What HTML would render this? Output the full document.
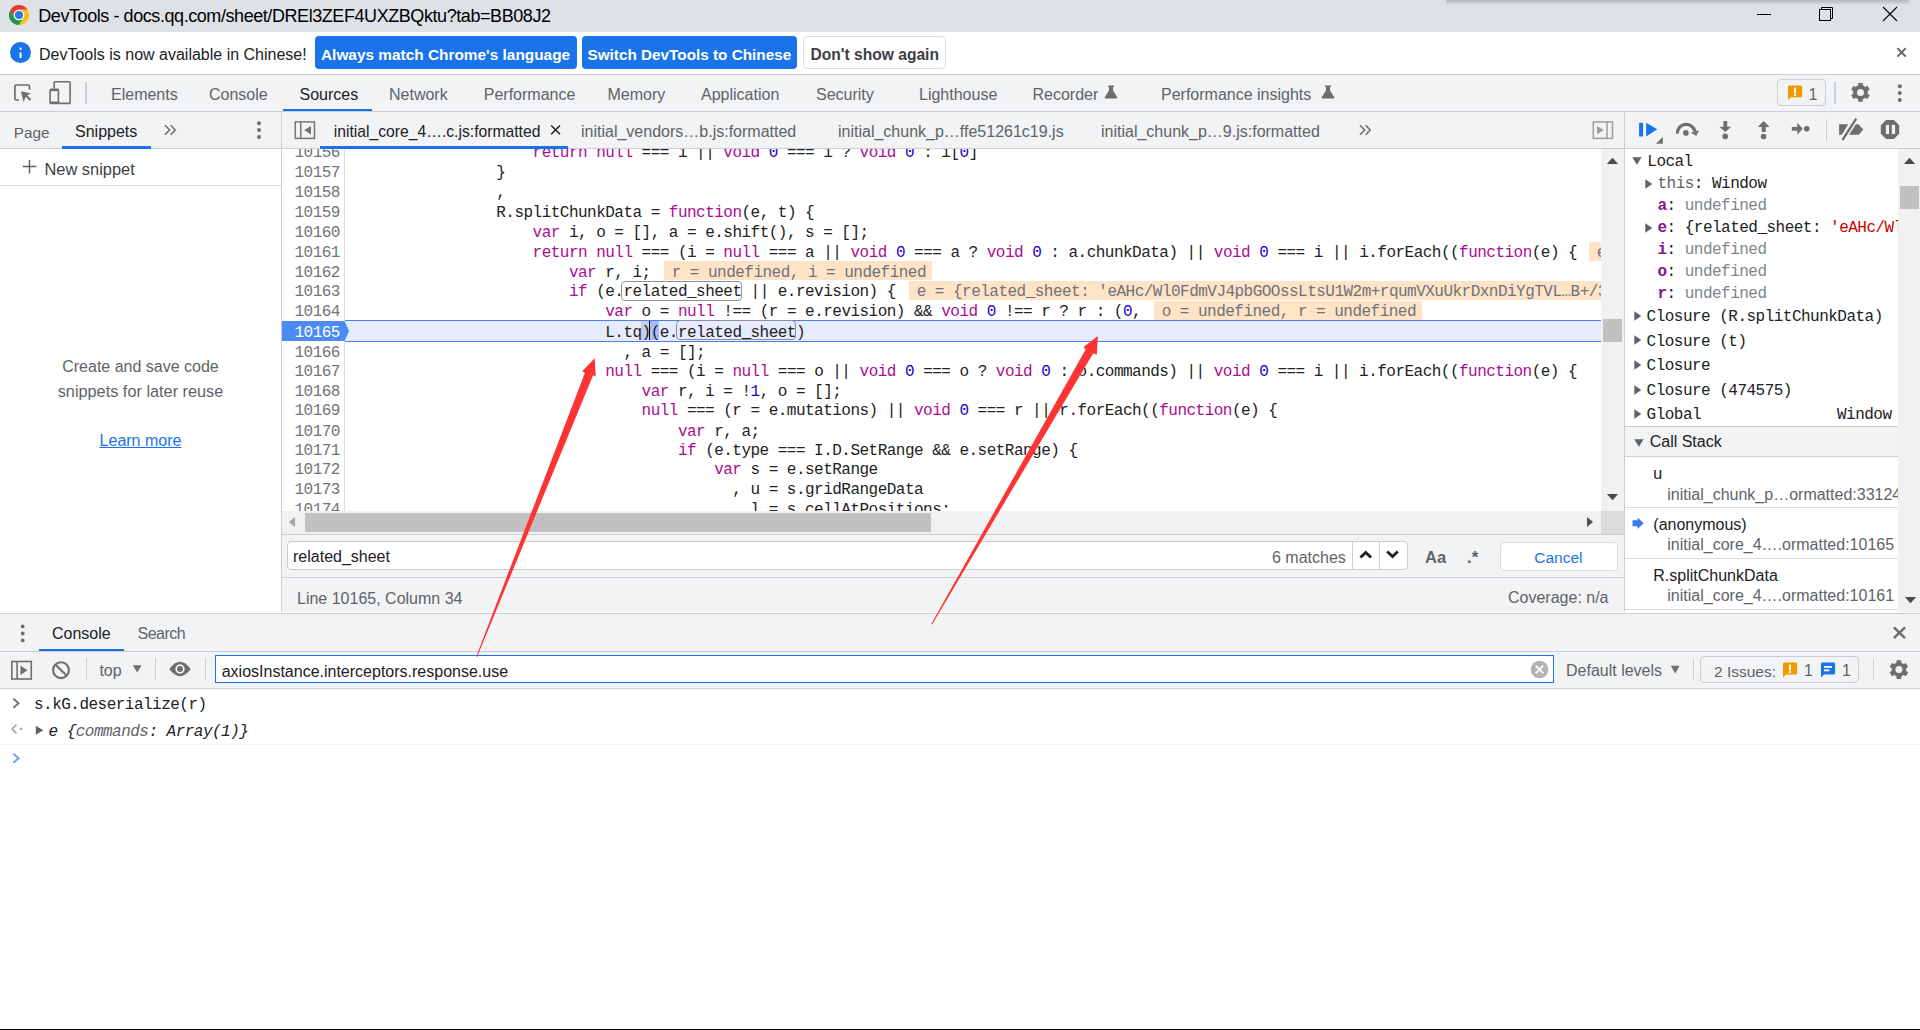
<!DOCTYPE html><html><head><meta charset="utf-8"><style>
html,body{margin:0;padding:0}
body{width:1920px;height:1030px;position:relative;overflow:hidden;background:#fff;font-family:"Liberation Sans",sans-serif}
.a{position:absolute}
.t{position:absolute;white-space:pre}
.k{color:#aa0d91}.n{color:#1c00cf}
</style></head><body>
<div class="a" style="left:0px;top:0px;width:1920px;height:32px;background:#dee1e6;"></div>
<div class="a" style="left:1446px;top:0;width:463px;height:5px;background:linear-gradient(#b5b8bd,#c3c6cb 40%,#dee1e6)"></div>
<svg class="a" style="left:9px;top:5px;" width="20" height="20" viewBox="0 0 20 20"><path d="M10.00 4.70 L18.57 4.85 A10 10 0 0 0 1.25 5.15 L5.41 12.65 A5.3 5.3 0 0 1 10.00 4.70 Z" fill="#e53f31"/><path d="M5.41 12.65 L1.25 5.15 A10 10 0 0 0 10.17 20.00 L14.59 12.65 A5.3 5.3 0 0 1 5.41 12.65 Z" fill="#22994a"/><path d="M14.59 12.65 L10.17 20.00 A10 10 0 0 0 18.57 4.85 L10.00 4.70 A5.3 5.3 0 0 1 14.59 12.65 Z" fill="#fbbf1a"/><circle cx="10" cy="10" r="5.3" fill="#fff"/><circle cx="10" cy="10" r="4.1" fill="#3079e6"/></svg>
<div class="t" style="left:38.3px;top:7.06px;font-size:18px;line-height:18px;color:#000;font-weight:normal;font-family:'Liberation Sans', sans-serif;letter-spacing:-0.43px">DevTools - docs.qq.com/sheet/DREl3ZEF4UXZBQktu?tab=BB08J2</div>
<div class="a" style="left:1757px;top:14px;width:14px;height:1px;background:#000;"></div>
<svg class="a" style="left:1815px;top:4px;" width="22" height="20" viewBox="0 0 22 20"><rect x="4.5" y="5.5" width="11" height="11" fill="none" stroke="#000" stroke-width="1"/><path d="M6.5 5.5 V3.5 H17.5 V14.5 H15.5" fill="none" stroke="#000" stroke-width="1"/></svg>
<svg class="a" style="left:1880px;top:5px;" width="20" height="20" viewBox="0 0 20 20"><path d="M3 2 L17 16 M17 2 L3 16" stroke="#000" stroke-width="1.1"/></svg>
<div class="a" style="left:0px;top:32px;width:1920px;height:42px;background:#fff;"></div>
<div class="a" style="left:0px;top:74px;width:1920px;height:1px;background:#cacdd1;"></div>
<svg class="a" style="left:10px;top:42px;" width="21" height="21" viewBox="0 0 21 21"><circle cx="10.5" cy="10.5" r="10.5" fill="#1a73e8"/><rect x="9.5" y="10.4" width="2" height="5.6" fill="#fff"/><rect x="9.5" y="5.7" width="2" height="2" fill="#fff"/></svg>
<div class="t" style="left:39px;top:47.36px;font-size:16px;line-height:16px;color:#202124;font-weight:normal;font-family:'Liberation Sans', sans-serif;">DevTools is now available in Chinese!</div>
<div class="a" style="left:315px;top:36px;width:262px;height:33px;background:#1a73e8;border-radius:4px"></div>
<div class="t" style="left:321px;top:47.36px;font-size:15.4px;line-height:15.4px;color:#fff;font-weight:bold;font-family:'Liberation Sans', sans-serif;">Always match Chrome&#x27;s language</div>
<div class="a" style="left:582px;top:36px;width:215px;height:33px;background:#1a73e8;border-radius:4px"></div>
<div class="t" style="left:587.5px;top:47.45px;font-size:15.3px;line-height:15.3px;color:#fff;font-weight:bold;font-family:'Liberation Sans', sans-serif;">Switch DevTools to Chinese</div>
<div class="a" style="left:803px;top:36px;width:141px;height:31px;background:#fff;border:1px solid #dadce0;border-radius:4px"></div>
<div class="t" style="left:810.5px;top:47.19px;font-size:15.6px;line-height:15.6px;color:#3c4043;font-weight:bold;font-family:'Liberation Sans', sans-serif;">Don&#x27;t show again</div>
<svg class="a" style="left:1894px;top:46px;" width="14" height="14" viewBox="0 0 14 14"><path d="M3.4 2.1 L11.8 10.6 M11.8 2.1 L3.4 10.6" stroke="#5f6368" stroke-width="1.9"/></svg>
<div class="a" style="left:0px;top:75px;width:1920px;height:37px;background:#f1f3f4;"></div>
<div class="a" style="left:0px;top:111px;width:1920px;height:1px;background:#cacdd1;"></div>
<svg class="a" style="left:12px;top:82px;" width="22" height="22" viewBox="0 0 22 22"><path d="M6.9 18.0 H4.1 Q2.9 18.0 2.9 16.8 V4.2 Q2.9 3.0 4.1 3.0 H16.3 Q17.5 3.0 17.5 4.2 V7.8" fill="none" stroke="#6e6e6e" stroke-width="1.7"/>
<path d="M8.9 9.3 L19.2 11.6 L15.2 13.3 L19.2 17.3 L17.8 18.7 L13.8 14.7 L11.5 19.9 Z" fill="#6e6e6e"/></svg>
<svg class="a" style="left:46px;top:80px;" width="28" height="26" viewBox="0 0 28 26"><path d="M8.2 8.5 V2.5 Q8.2 1.7 9 1.7 H23.3 Q24.1 1.7 24.1 2.5 V22.6 Q24.1 23.4 23.3 23.4 H12.5" fill="none" stroke="#6e6e6e" stroke-width="1.6"/>
<rect x="4.1" y="9.3" width="8.3" height="14.2" rx="1" fill="none" stroke="#6e6e6e" stroke-width="1.6"/><rect x="4.1" y="21.6" width="8.3" height="2" fill="#6e6e6e"/><rect x="4.1" y="9.3" width="8.3" height="1.8" fill="#6e6e6e"/></svg>
<div class="a" style="left:85px;top:82px;width:1.5px;height:21.5px;background:#cacdd1;"></div>
<div class="t" style="left:111px;top:87.36px;font-size:16px;line-height:16px;color:#5f6368;font-weight:normal;font-family:'Liberation Sans', sans-serif;">Elements</div>
<div class="t" style="left:209px;top:87.36px;font-size:16px;line-height:16px;color:#5f6368;font-weight:normal;font-family:'Liberation Sans', sans-serif;">Console</div>
<div class="t" style="left:299.5px;top:87.36px;font-size:16px;line-height:16px;color:#202124;font-weight:normal;font-family:'Liberation Sans', sans-serif;">Sources</div>
<div class="t" style="left:389px;top:87.36px;font-size:16px;line-height:16px;color:#5f6368;font-weight:normal;font-family:'Liberation Sans', sans-serif;">Network</div>
<div class="t" style="left:483.75px;top:87.36px;font-size:16px;line-height:16px;color:#5f6368;font-weight:normal;font-family:'Liberation Sans', sans-serif;">Performance</div>
<div class="t" style="left:607.5px;top:87.36px;font-size:16px;line-height:16px;color:#5f6368;font-weight:normal;font-family:'Liberation Sans', sans-serif;">Memory</div>
<div class="t" style="left:701px;top:87.36px;font-size:16px;line-height:16px;color:#5f6368;font-weight:normal;font-family:'Liberation Sans', sans-serif;">Application</div>
<div class="t" style="left:816px;top:87.36px;font-size:16px;line-height:16px;color:#5f6368;font-weight:normal;font-family:'Liberation Sans', sans-serif;">Security</div>
<div class="t" style="left:919px;top:87.36px;font-size:16px;line-height:16px;color:#5f6368;font-weight:normal;font-family:'Liberation Sans', sans-serif;">Lighthouse</div>
<div class="t" style="left:1032.5px;top:87.36px;font-size:16px;line-height:16px;color:#5f6368;font-weight:normal;font-family:'Liberation Sans', sans-serif;">Recorder</div>
<div class="t" style="left:1161px;top:87.36px;font-size:16px;line-height:16px;color:#5f6368;font-weight:normal;font-family:'Liberation Sans', sans-serif;">Performance insights</div>
<div class="a" style="left:283px;top:108.5px;width:89px;height:2.5px;background:#1a73e8;"></div>
<svg class="a" style="left:1103.8px;top:85px;" width="14" height="14" viewBox="0 0 14 14"><path d="M4 0.5 H10 V2 H9 V5.2 L13.2 12.2 Q13.6 13.5 12.3 13.5 H1.7 Q0.4 13.5 0.8 12.2 L5 5.2 V2 H4 Z" fill="#6e6e6e"/></svg>
<svg class="a" style="left:1320.5px;top:85px;" width="14" height="14" viewBox="0 0 14 14"><path d="M4 0.5 H10 V2 H9 V5.2 L13.2 12.2 Q13.6 13.5 12.3 13.5 H1.7 Q0.4 13.5 0.8 12.2 L5 5.2 V2 H4 Z" fill="#6e6e6e"/></svg>
<div class="a" style="left:1777px;top:79px;width:47px;height:25px;border:1.3px solid #cacdd1;border-radius:4px"></div>
<svg class="a" style="left:1787px;top:85px;" width="16" height="16" viewBox="0 0 16 16"><path d="M2.2 0.5 H13.8 Q15.1 0.5 15.1 1.8 V11 Q15.1 12.3 13.8 12.3 H4 L1 15 V1.8 Q1 0.5 2.2 0.5 Z" fill="#f29900"/><rect x="7" y="2.6" width="2" height="5.6" fill="#fff"/><rect x="7" y="9" width="2" height="1.9" fill="#fff"/></svg>
<div class="t" style="left:1808.5px;top:87.06px;font-size:16px;line-height:16px;color:#5f6368;font-weight:normal;font-family:'Liberation Sans', sans-serif;">1</div>
<div class="a" style="left:1834.3px;top:82px;width:1.5px;height:21.5px;background:#cacdd1;"></div>
<svg class="a" style="left:1848px;top:80px;" width="25" height="25" viewBox="0 0 25 25"><path d="M10.15 7.40 L10.15 3.00 L14.75 3.00 L14.75 7.40 Z" fill="#6e6e6e"/><path d="M6.97 11.89 L3.16 9.69 L5.46 5.71 L9.27 7.91 Z" fill="#6e6e6e"/><path d="M9.27 16.89 L5.46 19.09 L3.16 15.11 L6.97 12.91 Z" fill="#6e6e6e"/><path d="M14.75 17.40 L14.75 21.80 L10.15 21.80 L10.15 17.40 Z" fill="#6e6e6e"/><path d="M17.93 12.91 L21.74 15.11 L19.44 19.09 L15.63 16.89 Z" fill="#6e6e6e"/><path d="M15.63 7.91 L19.44 5.71 L21.74 9.69 L17.93 11.89 Z" fill="#6e6e6e"/><circle cx="12.45" cy="12.4" r="7.3" fill="#6e6e6e"/><circle cx="12.45" cy="12.4" r="3.5" fill="#f1f3f4"/></svg>
<svg class="a" style="left:1890px;top:80px;" width="20" height="26" viewBox="0 0 20 26"><circle cx="9.8" cy="6.2" r="2" fill="#6e6e6e"/><circle cx="9.8" cy="13.1" r="2" fill="#6e6e6e"/><circle cx="9.8" cy="19.9" r="2" fill="#6e6e6e"/></svg>
<div class="a" style="left:0px;top:112px;width:1920px;height:37px;background:#f1f3f4;"></div>
<div class="a" style="left:0px;top:148px;width:1920px;height:1px;background:#cacdd1;"></div>
<div class="t" style="left:13.75px;top:124.65px;font-size:15.3px;line-height:15.3px;color:#5f6368;font-weight:normal;font-family:'Liberation Sans', sans-serif;">Page</div>
<div class="t" style="left:75px;top:124.06px;font-size:16px;line-height:16px;color:#202124;font-weight:normal;font-family:'Liberation Sans', sans-serif;">Snippets</div>
<div class="a" style="left:62px;top:146px;width:89px;height:2.5px;background:#1a73e8;"></div>
<svg class="a" style="left:163.5px;top:123.5px;" width="14" height="13" viewBox="0 0 14 13"><path d="M1 1.2 L5.6 6 L1 10.8 M6.6 1.2 L11.2 6 L6.6 10.8" fill="none" stroke="#6e6e6e" stroke-width="1.6"/></svg>
<svg class="a" style="left:250px;top:118px;" width="20" height="24" viewBox="0 0 20 24"><circle cx="9" cy="5.2" r="2" fill="#6e6e6e"/><circle cx="9" cy="12.1" r="2" fill="#6e6e6e"/><circle cx="9" cy="19" r="2" fill="#6e6e6e"/></svg>
<div class="a" style="left:281px;top:112px;width:1px;height:500px;background:#cacdd1;"></div>
<svg class="a" style="left:293px;top:120px;" width="23" height="20" viewBox="0 0 23 20"><rect x="2.3" y="1.9" width="19.2" height="16.5" fill="none" stroke="#757575" stroke-width="1.5"/><rect x="7" y="1.9" width="1.5" height="16.5" fill="#757575"/><path d="M11.2 10.1 L18 6 V14.4 Z" fill="#757575"/></svg>
<div class="t" style="left:333.75px;top:124.31px;font-size:15.7px;line-height:15.7px;color:#202124;font-weight:normal;font-family:'Liberation Sans', sans-serif;">initial_core_4….c.js:formatted</div>
<svg class="a" style="left:549px;top:124px;" width="14" height="12" viewBox="0 0 14 12"><path d="M2.2 1.5 L11 10.3 M11 1.5 L2.2 10.3" stroke="#202124" stroke-width="1.5"/></svg>
<div class="a" style="left:320px;top:146px;width:248px;height:2.5px;background:#1a73e8;"></div>
<div class="t" style="left:581px;top:124.06px;font-size:16px;line-height:16px;color:#5f6368;font-weight:normal;font-family:'Liberation Sans', sans-serif;">initial_vendors…b.js:formatted</div>
<div class="t" style="left:838px;top:124.06px;font-size:16px;line-height:16px;color:#5f6368;font-weight:normal;font-family:'Liberation Sans', sans-serif;">initial_chunk_p…ffe51261c19.js</div>
<div class="t" style="left:1101px;top:124.06px;font-size:16px;line-height:16px;color:#5f6368;font-weight:normal;font-family:'Liberation Sans', sans-serif;">initial_chunk_p…9.js:formatted</div>
<svg class="a" style="left:1358.5px;top:123.5px;" width="14" height="13" viewBox="0 0 14 13"><path d="M1 1.2 L5.6 6 L1 10.8 M6.6 1.2 L11.2 6 L6.6 10.8" fill="none" stroke="#6e6e6e" stroke-width="1.6"/></svg>
<svg class="a" style="left:1591px;top:120px;" width="23" height="20" viewBox="0 0 23 20"><rect x="2.3" y="1.9" width="19.2" height="16.5" fill="none" stroke="#9e9e9e" stroke-width="1.5"/><rect x="15.3" y="1.9" width="1.5" height="16.5" fill="#9e9e9e"/><path d="M12.8 10.1 L6 6 V14.4 Z" fill="#9e9e9e"/></svg>
<div class="a" style="left:1624px;top:112px;width:1px;height:500px;background:#cacdd1;"></div>
<svg class="a" style="left:1636px;top:118px;" width="30" height="28" viewBox="0 0 30 28"><rect x="3.1" y="4.75" width="4" height="13.75" fill="#1a73e8"/><path d="M10.1 4.75 L21.2 11.3 L10.1 18.5 Z" fill="#1a73e8"/><path d="M19.9 25.7 L26.8 19.1 V25.7 Z" fill="#6e6e6e"/></svg>
<svg class="a" style="left:1670px;top:116px;" width="36" height="26" viewBox="0 0 36 26"><path d="M7.4 17.6 A8.8 8.8 0 0 1 24.81 15.37" fill="none" stroke="#6e6e6e" stroke-width="3.2"/><path d="M20.7 16.4 L29 14.3 L26.3 20 Z" fill="#6e6e6e"/><circle cx="15.9" cy="16.9" r="2.8" fill="#6e6e6e"/></svg>
<svg class="a" style="left:1715px;top:118px;" width="22" height="24" viewBox="0 0 22 24"><rect x="8.4" y="3" width="3.8" height="6" fill="#6e6e6e"/><path d="M4.4 8.8 H16.2 L10.3 14 Z" fill="#6e6e6e"/><circle cx="10.2" cy="18.4" r="2.8" fill="#6e6e6e"/></svg>
<svg class="a" style="left:1753px;top:118px;" width="22" height="24" viewBox="0 0 22 24"><path d="M10.6 3 L16.6 8.9 H4.9 Z" fill="#6e6e6e"/><rect x="8.7" y="8.5" width="4" height="5.5" fill="#6e6e6e"/><circle cx="10.6" cy="18.5" r="2.8" fill="#6e6e6e"/></svg>
<svg class="a" style="left:1788px;top:118px;" width="24" height="22" viewBox="0 0 24 22"><rect x="3.8" y="8.9" width="6" height="3.8" fill="#6e6e6e"/><path d="M9.3 4.75 L14.7 10.8 L9.3 16.8 Z" fill="#6e6e6e"/><circle cx="18.7" cy="10.8" r="2.8" fill="#6e6e6e"/></svg>
<div class="a" style="left:1825.8px;top:119px;width:1.3px;height:21.5px;background:#cacdd1;"></div>
<svg class="a" style="left:1834px;top:114px;" width="34" height="30" viewBox="0 0 34 30"><path d="M5.1 10.2 H14.2 L7.8 20.8 H5.1 Z" fill="#6e6e6e"/><path d="M21.9 10.2 H24.4 L29.3 15.5 L24.8 20.8 H15.1 Z" fill="#6e6e6e"/><path d="M8.4 26.2 L22.2 4.6" stroke="#6e6e6e" stroke-width="2.3"/></svg>
<svg class="a" style="left:1880px;top:119px;" width="21" height="21" viewBox="0 0 21 21"><path d="M6.1 1 H13.9 L19.2 6.3 V14.7 L13.9 20 H6.1 L0.8 14.7 V6.3 Z" fill="#6e6e6e"/><rect x="5.9" y="5.9" width="3.1" height="9.1" fill="#f1f3f4"/><rect x="11.8" y="5.9" width="3.3" height="9.1" fill="#f1f3f4"/></svg>
<div class="a" style="left:0px;top:149px;width:281px;height:463px;background:#fff;"></div>
<svg class="a" style="left:21px;top:159px;" width="18" height="16" viewBox="0 0 18 16"><path d="M1.6 7.6 H15.4 M8.5 0.9 V14.6" stroke="#5f6368" stroke-width="1.5"/></svg>
<div class="t" style="left:44.5px;top:160.77px;font-size:16.4px;line-height:16.4px;color:#3c4043;font-weight:normal;font-family:'Liberation Sans', sans-serif;">New snippet</div>
<div class="a" style="left:0px;top:185px;width:281px;height:1px;background:#dadce0;"></div>
<div class="t" style="left:0;width:281px;top:358.65px;text-align:center;font-size:16px;line-height:16px;color:#5f6368">Create and save code</div>
<div class="t" style="left:0;width:281px;top:383.40px;text-align:center;font-size:16.3px;line-height:16px;color:#5f6368">snippets for later reuse</div>
<div class="t" style="left:0;width:281px;top:433.20px;text-align:center;font-size:16px;line-height:16px;color:#1a73e8;text-decoration:underline">Learn more</div>
<div class="a" style="left:282px;top:149px;width:1319px;height:362px;background:#fff;"></div>
<div class="a" style="left:344px;top:149px;width:1px;height:362px;background:#dadce0;"></div>
<div class="a" style="left:282px;top:149px;width:1319px;height:362px;overflow:hidden">
<div class="a" style="left:63.00px;top:171.10px;width:1256.00px;height:21.90px;background:#e6ebff;box-sizing:border-box;border-top:1px solid #4a80f0;border-bottom:1px solid #4a80f0"></div>
<div class="a" style="left:1307.20px;top:92.50px;width:800.00px;height:19.00px;background:#ffe3c7;"></div>
<div class="t" style="left:1314.70px;top:96.00px;font-family:'Liberation Mono', monospace;font-size:16px;line-height:16px;letter-spacing:-0.520px;color:#6e7378;">e</div>
<div class="a" style="left:382.20px;top:112.30px;width:267.74px;height:19.00px;background:#ffe3c7;"></div>
<div class="t" style="left:389.70px;top:116.00px;font-family:'Liberation Mono', monospace;font-size:16px;line-height:16px;letter-spacing:-0.520px;color:#6e7378;">r = undefined, i = undefined</div>
<div class="a" style="left:627.20px;top:132.10px;width:800.00px;height:19.00px;background:#ffe3c7;"></div>
<div class="t" style="left:634.70px;top:135.00px;font-family:'Liberation Mono', monospace;font-size:16px;line-height:16px;letter-spacing:-0.520px;color:#6e7378;">e = {related_sheet: &#x27;eAHc/Wl0FdmVJ4pbGOOssLtsU1W2m+rqumVXuUkrDxnDiYgTVL…B+/3</div>
<div class="a" style="left:872.20px;top:151.90px;width:267.74px;height:19.00px;background:#ffe3c7;"></div>
<div class="t" style="left:879.70px;top:155.00px;font-family:'Liberation Mono', monospace;font-size:16px;line-height:16px;letter-spacing:-0.520px;color:#6e7378;">o = undefined, r = undefined</div>
<div class="a" style="left:339.25px;top:131.60px;width:120.25px;height:20.90px;background:transparent;box-sizing:border-box;border:1.3px solid #8d9196;border-radius:4px"></div>
<div class="a" style="left:394.25px;top:170.90px;width:120.00px;height:20.60px;background:transparent;box-sizing:border-box;border:1.3px solid #8d9196;border-radius:4px"></div>
<div class="a" style="left:358.56px;top:172.40px;width:9.08px;height:19.00px;background:rgba(0,0,0,0.12);"></div>
<div class="a" style="left:367.64px;top:172.40px;width:9.08px;height:19.00px;background:rgba(90,130,240,0.45);"></div>
<div class="t" style="left:250.60px;top:-4.00px;font-family:'Liberation Mono', monospace;font-size:16px;line-height:16px;letter-spacing:-0.520px;color:#222;"><span class="k">return</span> <span class="k">null</span> === i || <span class="k">void</span> <span class="n">0</span> === i ? <span class="k">void</span> <span class="n">0</span> : i[<span class="n">0</span>]</div>
<div class="t" style="left:214.28px;top:16.00px;font-family:'Liberation Mono', monospace;font-size:16px;line-height:16px;letter-spacing:-0.520px;color:#222;">}</div>
<div class="t" style="left:214.28px;top:36.00px;font-family:'Liberation Mono', monospace;font-size:16px;line-height:16px;letter-spacing:-0.520px;color:#222;">,</div>
<div class="t" style="left:214.28px;top:56.00px;font-family:'Liberation Mono', monospace;font-size:16px;line-height:16px;letter-spacing:-0.520px;color:#222;">R.splitChunkData = <span class="k">function</span>(e, t) {</div>
<div class="t" style="left:250.60px;top:76.00px;font-family:'Liberation Mono', monospace;font-size:16px;line-height:16px;letter-spacing:-0.520px;color:#222;"><span class="k">var</span> i, o = [], a = e.shift(), s = [];</div>
<div class="t" style="left:250.60px;top:96.00px;font-family:'Liberation Mono', monospace;font-size:16px;line-height:16px;letter-spacing:-0.520px;color:#222;"><span class="k">return</span> <span class="k">null</span> === (i = <span class="k">null</span> === a || <span class="k">void</span> <span class="n">0</span> === a ? <span class="k">void</span> <span class="n">0</span> : a.chunkData) || <span class="k">void</span> <span class="n">0</span> === i || i.forEach((<span class="k">function</span>(e) {</div>
<div class="t" style="left:286.92px;top:116.00px;font-family:'Liberation Mono', monospace;font-size:16px;line-height:16px;letter-spacing:-0.520px;color:#222;"><span class="k">var</span> r, i;</div>
<div class="t" style="left:286.92px;top:135.00px;font-family:'Liberation Mono', monospace;font-size:16px;line-height:16px;letter-spacing:-0.520px;color:#222;"><span class="k">if</span> (e.related_sheet || e.revision) {</div>
<div class="t" style="left:323.24px;top:155.00px;font-family:'Liberation Mono', monospace;font-size:16px;line-height:16px;letter-spacing:-0.520px;color:#222;"><span class="k">var</span> o = <span class="k">null</span> !== (r = e.revision) &amp;&amp; <span class="k">void</span> <span class="n">0</span> !== r ? r : (<span class="n">0</span>,</div>
<div class="t" style="left:323.24px;top:176.00px;font-family:'Liberation Mono', monospace;font-size:16px;line-height:16px;letter-spacing:-0.520px;color:#222;">L.tq)(e.related_sheet)</div>
<div class="t" style="left:341.40px;top:196.00px;font-family:'Liberation Mono', monospace;font-size:16px;line-height:16px;letter-spacing:-0.520px;color:#222;">, a = [];</div>
<div class="t" style="left:323.24px;top:215.00px;font-family:'Liberation Mono', monospace;font-size:16px;line-height:16px;letter-spacing:-0.520px;color:#222;"><span class="k">null</span> === (i = <span class="k">null</span> === o || <span class="k">void</span> <span class="n">0</span> === o ? <span class="k">void</span> <span class="n">0</span> : o.commands) || <span class="k">void</span> <span class="n">0</span> === i || i.forEach((<span class="k">function</span>(e) {</div>
<div class="t" style="left:359.56px;top:235.00px;font-family:'Liberation Mono', monospace;font-size:16px;line-height:16px;letter-spacing:-0.520px;color:#222;"><span class="k">var</span> r, i = !<span class="n">1</span>, o = [];</div>
<div class="t" style="left:359.56px;top:254.00px;font-family:'Liberation Mono', monospace;font-size:16px;line-height:16px;letter-spacing:-0.520px;color:#222;"><span class="k">null</span> === (r = e.mutations) || <span class="k">void</span> <span class="n">0</span> === r || r.forEach((<span class="k">function</span>(e) {</div>
<div class="t" style="left:395.88px;top:275.00px;font-family:'Liberation Mono', monospace;font-size:16px;line-height:16px;letter-spacing:-0.520px;color:#222;"><span class="k">var</span> r, a;</div>
<div class="t" style="left:395.88px;top:294.00px;font-family:'Liberation Mono', monospace;font-size:16px;line-height:16px;letter-spacing:-0.520px;color:#222;"><span class="k">if</span> (e.type === I.D.SetRange &amp;&amp; e.setRange) {</div>
<div class="t" style="left:432.20px;top:313.00px;font-family:'Liberation Mono', monospace;font-size:16px;line-height:16px;letter-spacing:-0.520px;color:#222;"><span class="k">var</span> s = e.setRange</div>
<div class="t" style="left:450.36px;top:333.00px;font-family:'Liberation Mono', monospace;font-size:16px;line-height:16px;letter-spacing:-0.520px;color:#222;">, u = s.gridRangeData</div>
<div class="t" style="left:450.36px;top:353.00px;font-family:'Liberation Mono', monospace;font-size:16px;line-height:16px;letter-spacing:-0.520px;color:#222;">, l = s.cellAtPositions;</div>
<div class="a" style="left:366.84px;top:172.40px;width:1.40px;height:19.00px;background:#000;"></div>
</div>
<div class="a" style="left:282px;top:149px;width:68px;height:362px;overflow:hidden">
<div class="t" style="left:12.50px;top:-4.00px;font-family:'Liberation Mono', monospace;font-size:16px;line-height:16px;letter-spacing:-0.520px;color:#70757a;">10156</div>
<div class="t" style="left:12.50px;top:16.00px;font-family:'Liberation Mono', monospace;font-size:16px;line-height:16px;letter-spacing:-0.520px;color:#70757a;">10157</div>
<div class="t" style="left:12.50px;top:36.00px;font-family:'Liberation Mono', monospace;font-size:16px;line-height:16px;letter-spacing:-0.520px;color:#70757a;">10158</div>
<div class="t" style="left:12.50px;top:56.00px;font-family:'Liberation Mono', monospace;font-size:16px;line-height:16px;letter-spacing:-0.520px;color:#70757a;">10159</div>
<div class="t" style="left:12.50px;top:76.00px;font-family:'Liberation Mono', monospace;font-size:16px;line-height:16px;letter-spacing:-0.520px;color:#70757a;">10160</div>
<div class="t" style="left:12.50px;top:96.00px;font-family:'Liberation Mono', monospace;font-size:16px;line-height:16px;letter-spacing:-0.520px;color:#70757a;">10161</div>
<div class="t" style="left:12.50px;top:116.00px;font-family:'Liberation Mono', monospace;font-size:16px;line-height:16px;letter-spacing:-0.520px;color:#70757a;">10162</div>
<div class="t" style="left:12.50px;top:135.00px;font-family:'Liberation Mono', monospace;font-size:16px;line-height:16px;letter-spacing:-0.520px;color:#70757a;">10163</div>
<div class="t" style="left:12.50px;top:155.00px;font-family:'Liberation Mono', monospace;font-size:16px;line-height:16px;letter-spacing:-0.520px;color:#70757a;">10164</div>
<svg class="a" style="left:0;top:171.90px" width="68" height="20" viewBox="0 0 68 20"><path d="M0 0 H62.5 L67 10 L62.5 20 H0 Z" fill="#4c8bf5"/></svg>
<div class="t" style="left:12.50px;top:176.00px;font-family:'Liberation Mono', monospace;font-size:16px;line-height:16px;letter-spacing:-0.520px;color:#fff;">10165</div>
<div class="t" style="left:12.50px;top:196.00px;font-family:'Liberation Mono', monospace;font-size:16px;line-height:16px;letter-spacing:-0.520px;color:#70757a;">10166</div>
<div class="t" style="left:12.50px;top:215.00px;font-family:'Liberation Mono', monospace;font-size:16px;line-height:16px;letter-spacing:-0.520px;color:#70757a;">10167</div>
<div class="t" style="left:12.50px;top:235.00px;font-family:'Liberation Mono', monospace;font-size:16px;line-height:16px;letter-spacing:-0.520px;color:#70757a;">10168</div>
<div class="t" style="left:12.50px;top:254.00px;font-family:'Liberation Mono', monospace;font-size:16px;line-height:16px;letter-spacing:-0.520px;color:#70757a;">10169</div>
<div class="t" style="left:12.50px;top:275.00px;font-family:'Liberation Mono', monospace;font-size:16px;line-height:16px;letter-spacing:-0.520px;color:#70757a;">10170</div>
<div class="t" style="left:12.50px;top:294.00px;font-family:'Liberation Mono', monospace;font-size:16px;line-height:16px;letter-spacing:-0.520px;color:#70757a;">10171</div>
<div class="t" style="left:12.50px;top:313.00px;font-family:'Liberation Mono', monospace;font-size:16px;line-height:16px;letter-spacing:-0.520px;color:#70757a;">10172</div>
<div class="t" style="left:12.50px;top:333.00px;font-family:'Liberation Mono', monospace;font-size:16px;line-height:16px;letter-spacing:-0.520px;color:#70757a;">10173</div>
<div class="t" style="left:12.50px;top:353.00px;font-family:'Liberation Mono', monospace;font-size:16px;line-height:16px;letter-spacing:-0.520px;color:#70757a;">10174</div>
</div>
<div class="a" style="left:1601px;top:149px;width:23px;height:362px;background:#f1f1f1;"></div>
<svg class="a" style="left:1605px;top:154px;" width="14" height="12" viewBox="0 0 14 12"><path d="M1.9 9.9 L7.5 3.8 L13.1 9.9 Z" fill="#4a4a4a"/></svg>
<div class="a" style="left:1603px;top:319px;width:19px;height:23px;background:#c1c1c1;"></div>
<svg class="a" style="left:1605px;top:492px;" width="14" height="12" viewBox="0 0 14 12"><path d="M1.9 2.1 L7.5 8.2 L13.1 2.1 Z" fill="#4a4a4a"/></svg>
<div class="a" style="left:282px;top:511px;width:1319px;height:23px;background:#f1f1f1;"></div>
<svg class="a" style="left:286px;top:515px;" width="12" height="14" viewBox="0 0 12 14"><path d="M9 2 L3 7 L9 12 Z" fill="#a3a3a3"/></svg>
<div class="a" style="left:305px;top:513px;width:626px;height:19px;background:#c1c1c1;"></div>
<svg class="a" style="left:1584px;top:515px;" width="12" height="14" viewBox="0 0 12 14"><path d="M3 2 L9 7 L3 12 Z" fill="#505050"/></svg>
<div class="a" style="left:1601px;top:511px;width:23px;height:23px;background:#dcdcdc;"></div>
<div class="a" style="left:282px;top:534px;width:1342px;height:1px;background:#cacdd1;"></div>
<div class="a" style="left:282px;top:535px;width:1342px;height:42px;background:#f1f3f4;"></div>
<div class="a" style="left:287px;top:541px;width:1119px;height:27px;background:#fff;border:1px solid #cacdd1;border-radius:4px"></div>
<div class="t" style="left:293px;top:549.36px;font-size:16px;line-height:16px;color:#202124;font-weight:normal;font-family:'Liberation Sans', sans-serif;">related_sheet</div>
<div class="t" style="left:1272px;top:550.36px;font-size:16px;line-height:16px;color:#5f6368;font-weight:normal;font-family:'Liberation Sans', sans-serif;">6 matches</div>
<div class="a" style="left:1352px;top:541.5px;width:1px;height:28px;background:#cacdd1;"></div>
<div class="a" style="left:1379px;top:541.5px;width:1px;height:28px;background:#cacdd1;"></div>
<svg class="a" style="left:1358px;top:548px;" width="15" height="13" viewBox="0 0 15 13"><path d="M2.4 9.6 L7.7 4.4 L13 9.6" fill="none" stroke="#202124" stroke-width="2.8"/></svg>
<svg class="a" style="left:1385px;top:548px;" width="15" height="13" viewBox="0 0 15 13"><path d="M2.2 3.4 L7.5 8.6 L12.8 3.4" fill="none" stroke="#202124" stroke-width="2.8"/></svg>
<div class="t" style="left:1425px;top:548.93px;font-size:16.5px;line-height:16.5px;color:#5f6368;font-weight:bold;font-family:'Liberation Sans', sans-serif;">Aa</div>
<div class="t" style="left:1467px;top:548.51px;font-size:17px;line-height:17px;color:#5f6368;font-weight:bold;font-family:'Liberation Sans', sans-serif;">.*</div>
<div class="a" style="left:1499.8px;top:541.5px;width:116px;height:27px;background:#fff;border:1px solid #dadce0;border-radius:4px"></div>
<div class="t" style="left:1534.3px;top:550.08px;font-size:15.5px;line-height:15.5px;color:#1a73e8;font-weight:normal;font-family:'Liberation Sans', sans-serif;">Cancel</div>
<div class="a" style="left:282px;top:577px;width:1342px;height:1px;background:#cacdd1;"></div>
<div class="a" style="left:282px;top:578px;width:1342px;height:34px;background:#f1f3f4;"></div>
<div class="t" style="left:297px;top:590.86px;font-size:16px;line-height:16px;color:#5f6368;font-weight:normal;font-family:'Liberation Sans', sans-serif;">Line 10165, Column 34</div>
<div class="t" style="left:1508px;top:590.36px;font-size:16px;line-height:16px;color:#5f6368;font-weight:normal;font-family:'Liberation Sans', sans-serif;">Coverage: n/a</div>
<div class="a" style="left:1625px;top:149px;width:295px;height:463px;background:#fff;"></div>
<div class="a" style="left:1898px;top:149px;width:22px;height:463px;background:#f1f1f1;"></div>
<svg class="a" style="left:1902px;top:154px;" width="14" height="12" viewBox="0 0 14 12"><path d="M1.9 9.9 L7.5 3.8 L13.1 9.9 Z" fill="#4a4a4a"/></svg>
<div class="a" style="left:1900px;top:186px;width:19px;height:23px;background:#c1c1c1;"></div>
<svg class="a" style="left:1903px;top:595px;" width="14" height="12" viewBox="0 0 14 12"><path d="M1.9 2.1 L7.5 8.2 L13.1 2.1 Z" fill="#4a4a4a"/></svg>
<div class="a" style="left:1625px;top:149px;width:273px;height:277px;overflow:hidden">
<svg class="a" style="left:7.00px;top:8.00px" width="11" height="9" viewBox="0 0 11 9"><path d="M0.3 0.3 H9.6 L4.95 7.8 Z" fill="#5f6368"/></svg>
<div class="t" style="left:22.30px;top:5.04px;font-family:'Liberation Mono', monospace;font-size:16px;line-height:16px;letter-spacing:-0.520px;color:#202124;">Local</div>
<svg class="a" style="left:20.00px;top:29.80px" width="9" height="11" viewBox="0 0 9 11"><path d="M0.3 0.3 L7.3 5 L0.3 9.8 Z" fill="#5f6368"/></svg>
<div class="t" style="left:32.50px;top:27.04px;font-family:'Liberation Mono', monospace;font-size:16px;line-height:16px;letter-spacing:-0.520px;color:#202124;"><span style="color:#5f6368">this</span>: Window</div>
<div class="t" style="left:32.50px;top:48.94px;font-family:'Liberation Mono', monospace;font-size:16px;line-height:16px;letter-spacing:-0.520px;color:#202124;"><b style="color:#881391">a</b>: <span style="color:#80868b">undefined</span></div>
<svg class="a" style="left:20.00px;top:73.80px" width="9" height="11" viewBox="0 0 9 11"><path d="M0.3 0.3 L7.3 5 L0.3 9.8 Z" fill="#5f6368"/></svg>
<div class="t" style="left:32.50px;top:70.84px;font-family:'Liberation Mono', monospace;font-size:16px;line-height:16px;letter-spacing:-0.520px;color:#202124;"><b style="color:#881391">e</b>: {related_sheet: <span style="color:#c80000">'eAHc/Wl0FdmVJ4pbGOOssLtsU1W2m+rqumVXuUkrDxnDiYgTVL</span></div>
<div class="t" style="left:32.50px;top:92.64px;font-family:'Liberation Mono', monospace;font-size:16px;line-height:16px;letter-spacing:-0.520px;color:#202124;"><b style="color:#881391">i</b>: <span style="color:#80868b">undefined</span></div>
<div class="t" style="left:32.50px;top:114.74px;font-family:'Liberation Mono', monospace;font-size:16px;line-height:16px;letter-spacing:-0.520px;color:#202124;"><b style="color:#881391">o</b>: <span style="color:#80868b">undefined</span></div>
<div class="t" style="left:32.50px;top:136.84px;font-family:'Liberation Mono', monospace;font-size:16px;line-height:16px;letter-spacing:-0.520px;color:#202124;"><b style="color:#881391">r</b>: <span style="color:#80868b">undefined</span></div>
<svg class="a" style="left:8.50px;top:161.60px" width="9" height="11" viewBox="0 0 9 11"><path d="M0.3 0.3 L7.3 5 L0.3 9.8 Z" fill="#5f6368"/></svg>
<div class="t" style="left:21.60px;top:159.84px;font-family:'Liberation Mono', monospace;font-size:16px;line-height:16px;letter-spacing:-0.520px;color:#202124;">Closure (R.splitChunkData)</div>
<svg class="a" style="left:8.50px;top:186.30px" width="9" height="11" viewBox="0 0 9 11"><path d="M0.3 0.3 L7.3 5 L0.3 9.8 Z" fill="#5f6368"/></svg>
<div class="t" style="left:21.60px;top:184.54px;font-family:'Liberation Mono', monospace;font-size:16px;line-height:16px;letter-spacing:-0.520px;color:#202124;">Closure (t)</div>
<svg class="a" style="left:8.50px;top:210.80px" width="9" height="11" viewBox="0 0 9 11"><path d="M0.3 0.3 L7.3 5 L0.3 9.8 Z" fill="#5f6368"/></svg>
<div class="t" style="left:21.60px;top:209.04px;font-family:'Liberation Mono', monospace;font-size:16px;line-height:16px;letter-spacing:-0.520px;color:#202124;">Closure</div>
<svg class="a" style="left:8.50px;top:235.50px" width="9" height="11" viewBox="0 0 9 11"><path d="M0.3 0.3 L7.3 5 L0.3 9.8 Z" fill="#5f6368"/></svg>
<div class="t" style="left:21.60px;top:233.74px;font-family:'Liberation Mono', monospace;font-size:16px;line-height:16px;letter-spacing:-0.520px;color:#202124;">Closure (474575)</div>
<svg class="a" style="left:8.50px;top:259.60px" width="9" height="11" viewBox="0 0 9 11"><path d="M0.3 0.3 L7.3 5 L0.3 9.8 Z" fill="#5f6368"/></svg>
<div class="t" style="left:21.60px;top:257.84px;font-family:'Liberation Mono', monospace;font-size:16px;line-height:16px;letter-spacing:-0.520px;color:#202124;">Global</div>
<div class="t" style="left:212.00px;top:257.84px;font-family:'Liberation Mono', monospace;font-size:16px;line-height:16px;letter-spacing:-0.520px;color:#202124;">Window</div>
</div>
<div class="a" style="left:1625px;top:425.5px;width:273px;height:1px;background:#cacdd1;"></div>
<div class="a" style="left:1625px;top:426.5px;width:273px;height:29px;background:#f1f3f4;"></div>
<div class="a" style="left:1625px;top:455.5px;width:273px;height:1.5px;background:#cacdd1;"></div>
<svg class="a" style="left:1633.5px;top:438.5px;" width="11" height="9" viewBox="0 0 11 9"><path d="M0.3 0.3 H9.6 L4.95 7.8 Z" fill="#5f6368"/></svg>
<div class="t" style="left:1649.7px;top:434.26px;font-size:16px;line-height:16px;color:#202124;font-weight:normal;font-family:'Liberation Sans', sans-serif;">Call Stack</div>
<div class="a" style="left:1625px;top:457px;width:273px;height:155px;overflow:hidden">
<div class="t" style="left:28.30px;top:9.16px;font-size:16px;line-height:16px;color:#202124">u</div>
<div class="t" style="left:42.30px;top:30.06px;font-size:16px;line-height:16px;color:#5f6368">initial_chunk_p…ormatted:33124</div>
<div class="a" style="left:0;top:50px;width:273px;height:1px;background:#dadce0"></div>
<svg class="a" style="left:7px;top:59.5px" width="13" height="13" viewBox="0 0 13 13"><path d="M0.5 3.3 H5.5 V0.5 L11.7 6.3 L5.5 12 V9.3 H0.5 Z" fill="#3a7cf2"/></svg>
<div class="t" style="left:28.30px;top:59.66px;font-size:16px;line-height:16px;color:#202124">(anonymous)</div>
<div class="t" style="left:42.30px;top:79.76px;font-size:16px;line-height:16px;color:#5f6368">initial_core_4….ormatted:10165</div>
<div class="a" style="left:0;top:101px;width:273px;height:1px;background:#dadce0"></div>
<div class="t" style="left:28.30px;top:110.96px;font-size:16px;line-height:16px;color:#202124">R.splitChunkData</div>
<div class="t" style="left:42.30px;top:130.96px;font-size:16px;line-height:16px;color:#5f6368">initial_core_4….ormatted:10161</div>
<div class="a" style="left:0;top:152px;width:273px;height:1px;background:#dadce0"></div>
</div>
<div class="a" style="left:0px;top:613px;width:1920px;height:1px;background:#cacdd1;"></div>
<div class="a" style="left:0px;top:614px;width:1920px;height:37px;background:#f1f3f4;"></div>
<div class="a" style="left:0px;top:651px;width:1920px;height:1px;background:#cacdd1;"></div>
<svg class="a" style="left:15px;top:620px;" width="16" height="26" viewBox="0 0 16 26"><circle cx="7.7" cy="6.4" r="1.9" fill="#6e6e6e"/><circle cx="7.7" cy="13.5" r="1.9" fill="#6e6e6e"/><circle cx="7.7" cy="20.4" r="1.9" fill="#6e6e6e"/></svg>
<div class="t" style="left:52px;top:626.06px;font-size:16px;line-height:16px;color:#202124;font-weight:normal;font-family:'Liberation Sans', sans-serif;">Console</div>
<div class="t" style="left:137.5px;top:626.26px;font-size:16px;line-height:16px;color:#5f6368;font-weight:normal;font-family:'Liberation Sans', sans-serif;letter-spacing:-0.5px">Search</div>
<div class="a" style="left:39px;top:648.8px;width:85px;height:2.7px;background:#1a73e8;"></div>
<svg class="a" style="left:1890px;top:623px;" width="20" height="20" viewBox="0 0 20 20"><path d="M3.9 4.3 L15.0 15.2 M15.0 4.3 L3.9 15.2" stroke="#6e6e6e" stroke-width="2.5"/></svg>
<div class="a" style="left:0px;top:652px;width:1920px;height:36px;background:#f1f3f4;"></div>
<div class="a" style="left:0px;top:688px;width:1920px;height:1px;background:#cacdd1;"></div>
<svg class="a" style="left:9px;top:659px;" width="25" height="23" viewBox="0 0 25 23"><rect x="2.8" y="2.5" width="19.5" height="17.5" fill="none" stroke="#6e6e6e" stroke-width="1.6"/><rect x="7.3" y="2.5" width="1.6" height="17.5" fill="#6e6e6e"/><path d="M11.5 6.5 L18.4 11.2 L11.5 16 Z" fill="#6e6e6e"/></svg>
<svg class="a" style="left:50px;top:659px;" width="23" height="23" viewBox="0 0 23 23"><circle cx="11" cy="11.2" r="7.9" fill="none" stroke="#6e6e6e" stroke-width="2.1"/><path d="M5.6 5.8 L16.5 16.6" stroke="#6e6e6e" stroke-width="2.1"/></svg>
<div class="a" style="left:85.5px;top:658px;width:1px;height:22px;background:#cacdd1;"></div>
<div class="t" style="left:99.4px;top:663.16px;font-size:16px;line-height:16px;color:#5f6368;font-weight:normal;font-family:'Liberation Sans', sans-serif;">top</div>
<svg class="a" style="left:132px;top:664px;" width="11" height="10" viewBox="0 0 11 10"><path d="M0.8 1.2 H9.6 L5.2 8.6 Z" fill="#6e6e6e"/></svg>
<div class="a" style="left:154.5px;top:658px;width:1px;height:22px;background:#cacdd1;"></div>
<svg class="a" style="left:167px;top:660px;" width="27" height="18" viewBox="0 0 27 18"><path d="M2.3 9 Q13 -5.6 23.7 9 Q13 23.6 2.3 9 Z" fill="#6e6e6e"/><circle cx="13" cy="9" r="4.7" fill="#f1f3f4"/><circle cx="13" cy="9" r="2.9" fill="#6e6e6e"/></svg>
<div class="a" style="left:205px;top:658px;width:1px;height:22px;background:#cacdd1;"></div>
<div class="a" style="left:214.8px;top:655px;width:1339.2px;height:28px;box-sizing:border-box;background:#fff;border:1.3px solid #1a73e8"></div>
<div class="t" style="left:221.7px;top:663.66px;font-size:16px;line-height:16px;color:#202124;font-weight:normal;font-family:'Liberation Sans', sans-serif;">axiosInstance.interceptors.response.use</div>
<svg class="a" style="left:1530px;top:660px;" width="19" height="19" viewBox="0 0 19 19"><circle cx="9.5" cy="9.5" r="8.8" fill="#b3b3b3"/><path d="M5.7 5.7 L13.3 13.3 M13.3 5.7 L5.7 13.3" stroke="#fff" stroke-width="1.8"/></svg>
<div class="t" style="left:1566px;top:663.16px;font-size:16px;line-height:16px;color:#5f6368;font-weight:normal;font-family:'Liberation Sans', sans-serif;">Default levels</div>
<svg class="a" style="left:1669.5px;top:664.5px;" width="11" height="10" viewBox="0 0 11 10"><path d="M0.8 0.8 H9.6 L5.2 8.4 Z" fill="#6e6e6e"/></svg>
<div class="a" style="left:1693px;top:658.5px;width:1.3px;height:21.5px;background:#cacdd1;"></div>
<div class="a" style="left:1700px;top:656.3px;width:157px;height:24.5px;border:1.3px solid #cacdd1;border-radius:4px"></div>
<div class="t" style="left:1714px;top:663.58px;font-size:15.5px;line-height:15.5px;color:#5f6368;font-weight:normal;font-family:'Liberation Sans', sans-serif;">2 Issues:</div>
<svg class="a" style="left:1782px;top:661.5px;" width="16" height="17" viewBox="0 0 16 17"><path d="M2.2 0.5 H13.8 Q15.1 0.5 15.1 1.8 V11.3 Q15.1 12.6 13.8 12.6 H4 L1 15.5 V1.8 Q1 0.5 2.2 0.5 Z" fill="#f29900"/><rect x="7" y="2.6" width="2" height="5.8" fill="#fff"/><rect x="7" y="9.2" width="2" height="1.9" fill="#fff"/></svg>
<div class="t" style="left:1804px;top:663.16px;font-size:16px;line-height:16px;color:#5f6368;font-weight:normal;font-family:'Liberation Sans', sans-serif;">1</div>
<svg class="a" style="left:1820px;top:661.5px;" width="16" height="17" viewBox="0 0 16 17"><path d="M2.2 0.5 H13.8 Q15.1 0.5 15.1 1.8 V11.3 Q15.1 12.6 13.8 12.6 H4 L1 15.5 V1.8 Q1 0.5 2.2 0.5 Z" fill="#1a73e8"/><rect x="4" y="4" width="8" height="1.8" fill="#fff"/><rect x="4" y="7.4" width="5.5" height="1.8" fill="#fff"/></svg>
<div class="t" style="left:1842px;top:663.16px;font-size:16px;line-height:16px;color:#5f6368;font-weight:normal;font-family:'Liberation Sans', sans-serif;">1</div>
<div class="a" style="left:1873px;top:658.5px;width:1.3px;height:21.5px;background:#cacdd1;"></div>
<svg class="a" style="left:1887px;top:657px;" width="25" height="25" viewBox="0 0 25 25"><path d="M9.60 7.60 L9.60 3.20 L14.20 3.20 L14.20 7.60 Z" fill="#6e6e6e"/><path d="M6.42 12.09 L2.61 9.89 L4.91 5.91 L8.72 8.11 Z" fill="#6e6e6e"/><path d="M8.72 17.09 L4.91 19.29 L2.61 15.31 L6.42 13.11 Z" fill="#6e6e6e"/><path d="M14.20 17.60 L14.20 22.00 L9.60 22.00 L9.60 17.60 Z" fill="#6e6e6e"/><path d="M17.38 13.11 L21.19 15.31 L18.89 19.29 L15.08 17.09 Z" fill="#6e6e6e"/><path d="M15.08 8.11 L18.89 5.91 L21.19 9.89 L17.38 12.09 Z" fill="#6e6e6e"/><circle cx="11.9" cy="12.6" r="7.3" fill="#6e6e6e"/><circle cx="11.9" cy="12.6" r="3.5" fill="#f1f3f4"/></svg>
<svg class="a" style="left:9px;top:696px;" width="14" height="14" viewBox="0 0 14 14"><path d="M4.5 2.8 L9.5 7.3 L4.5 11.8" fill="none" stroke="#6e7378" stroke-width="1.9"/></svg>
<div class="t" style="left:34px;top:696.54px;font-family:'Liberation Mono', monospace;font-size:16px;line-height:16px;letter-spacing:-0.520px;color:#202124;">s.kG.deserialize(r)</div>
<svg class="a" style="left:9px;top:722px;" width="16" height="14" viewBox="0 0 16 14"><path d="M7.5 2.6 L3 7 L7.5 11.4" fill="none" stroke="#a8adb2" stroke-width="1.8"/><circle cx="12" cy="7" r="1.3" fill="#a8adb2"/></svg>
<svg class="a" style="left:34.5px;top:724.5px;" width="10" height="11" viewBox="0 0 10 11"><path d="M0.8 0.8 L8.4 5.3 L0.8 9.8 Z" fill="#5f6368"/></svg>
<div class="t" style="left:48.5px;top:723.54px;font-family:'Liberation Mono', monospace;font-size:16px;line-height:16px;letter-spacing:-0.520px;color:#202124;font-style:italic">e {<span style="color:#5f6368">commands</span>: Array(1)}</div>
<div class="a" style="left:0px;top:744px;width:1920px;height:1px;background:#f0f0f0;"></div>
<svg class="a" style="left:9px;top:751px;" width="14" height="14" viewBox="0 0 14 14"><path d="M4.5 2.8 L9.5 7.3 L4.5 11.8" fill="none" stroke="#6c9ef8" stroke-width="2"/></svg>
<div class="a" style="left:0px;top:1029px;width:1920px;height:1px;background:#000;"></div>
<svg class="a" style="left:0;top:0" width="1920" height="1030" viewBox="0 0 1920 1030"><path d="M477.06 657.08 L593.20 375.00 L595.80 376.70 L594.65 358.30 L582.40 370.90 L584.75 373.20 L476.14 656.72 Z" fill="#fe3333"/><path d="M932.13 624.45 L1093.20 353.20 L1096.80 354.80 L1097.90 336.00 L1083.60 346.90 L1085.60 349.40 L931.27 623.95 Z" fill="#fe3333"/></svg>
</body></html>
